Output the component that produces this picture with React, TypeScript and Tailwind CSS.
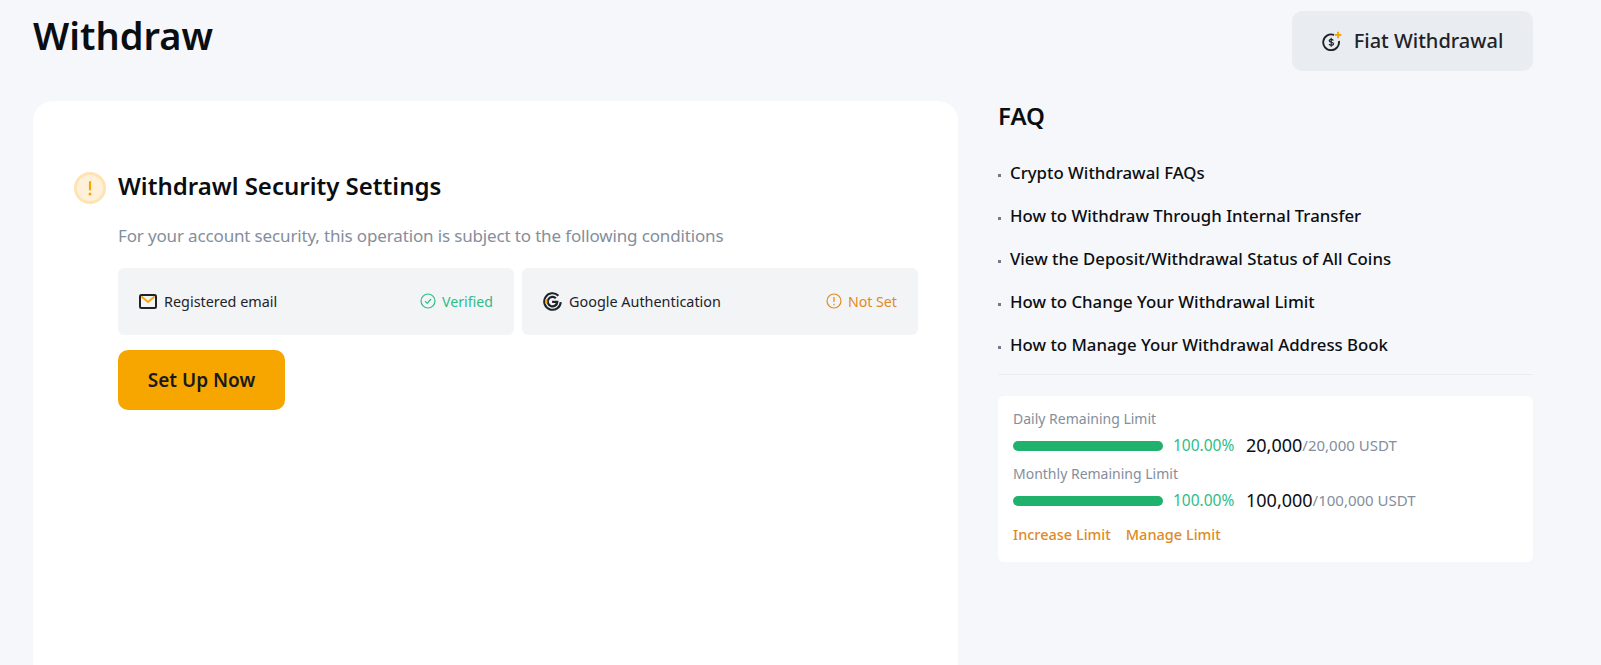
// Withdraw page: security settings card with FAQ and limits on the side.
const FONT = "font-['Noto_Sans',sans-serif]";

const FAQS = [
  'Crypto Withdrawal FAQs',
  'How to Withdraw Through Internal Transfer',
  'View the Deposit/Withdrawal Status of All Coins',
  'How to Change Your Withdrawal Limit',
  'How to Manage Your Withdrawal Address Book',
];

function FiatIcon() {
  return (
    <svg viewBox="0 0 20 20" className="w-5 h-5 shrink-0" fill="none">
      <path d="M12 4A7.9 7.9 0 1 0 16.9 10" stroke="#1e2329" strokeWidth="1.9" />
      <path d="M11.3 9.4c-.4-.8-1.2-1.1-2.1-1.1-1.1 0-2 .5-2 1.4 0 2.1 4.3 1 4.3 3.1 0 1-.9 1.5-2.2 1.5-1 0-1.8-.4-2.2-1.2M9.2 6.8v9" stroke="#1e2329" strokeWidth="1.2" />
      <path d="M16 0.8v6.4M12.8 4h6.4" stroke="#f7a600" strokeWidth="1.9" />
    </svg>
  );
}

function WarnBadge() {
  return (
    <svg viewBox="0 0 32 32" className="w-8 h-8 shrink-0">
      <circle cx="16" cy="16" r="14.5" fill="#fff1d9" stroke="#ffe3b3" strokeWidth="3" />
      <rect x="14.9" y="9" width="2.2" height="9.5" rx="1.1" fill="#f7a600" />
      <circle cx="16" cy="22" r="1.5" fill="#f7a600" />
    </svg>
  );
}

function MailIcon() {
  return (
    <svg viewBox="0 0 18 15" className="w-[18px] h-[15px] shrink-0" fill="none">
      <rect x="1" y="1" width="16" height="13" rx="1.5" stroke="#1e2329" strokeWidth="2" />
      <path d="M2.5 2.5L9 8l6.5-5.5" stroke="#f7a600" strokeWidth="1.8" />
    </svg>
  );
}

function GoogleIcon() {
  return (
    <svg viewBox="0 0 20 20" className="w-[19px] h-[19px] shrink-0" fill="none">
      <path d="M16.2 3.9A8.7 8.7 0 1 0 18.7 10.6" stroke="#1e2329" strokeWidth="2.2" />
      <path d="M13.5 6.6A5 5 0 1 0 15 10.4H9.6" stroke="#1e2329" strokeWidth="2.4" />
      <path d="M2.4 7.6h2.2v4.6H2.4z" fill="#f7a600" />
    </svg>
  );
}

function CheckCircle() {
  return (
    <svg viewBox="0 0 16 16" className="w-4 h-4 shrink-0" fill="none" stroke="#2ebd85" strokeWidth="1.2">
      <circle cx="8" cy="8" r="7" />
      <path d="M5 8.2l2.2 2.2L11 6" />
    </svg>
  );
}

function AlertCircle() {
  return (
    <svg viewBox="0 0 16 16" className="w-4 h-4 shrink-0" fill="none" stroke="#e08a1e" strokeWidth="1.2">
      <circle cx="8" cy="8" r="7" />
      <path d="M8 4v5M8 10.8v1.4" />
    </svg>
  );
}

function Condition({ icon, label, status, statusIcon, color }: {
  icon: React.ReactNode; label: string; status: string; statusIcon: React.ReactNode; color: string;
}) {
  return (
    <div className="flex-1 h-[67px] rounded-md bg-[#f3f4f6] flex items-center justify-between px-[21px]">
      <div className="flex items-center gap-[7px] text-[14.4px] text-[#1e2329]">
        {icon}
        <span>{label}</span>
      </div>
      <div className={`flex items-center gap-[6px] text-[14.2px] ${color}`}>
        {statusIcon}
        <span>{status}</span>
      </div>
    </div>
  );
}

function Limit({ label, value, total }: { label: string; value: string; total: string }) {
  return (
    <div>
      <p className="text-[14px] leading-[20px] text-[#848e9c]">{label}</p>
      <div className="flex items-center h-[35px] pb-[2px]">
        <div className="w-[150px] h-[10px] rounded-full bg-[#20b26c]" />
        <span className="ml-[10px] w-[73px] text-[15.5px] text-[#2ebd85]">100.00%</span>
        <span className="text-[18px] text-[#0b0e11]">{value}</span>
        <span className="text-[15px] text-[#848e9c]">/{total} USDT</span>
      </div>
    </div>
  );
}

export default function App() {
  return (
    <div className={`${FONT} h-screen overflow-hidden bg-[#f5f7fb] pl-[33px] pr-[68px]`}>
      <header className="h-[101px] flex items-start justify-between">
        <h1 className="text-[38px] leading-[70px] font-semibold text-[#0b0e11]">Withdraw</h1>
        <button className="mt-[11px] w-[241px] h-[60px] rounded-[10px] bg-[#e9ecf0] flex items-center justify-center gap-[12px] text-[20px] font-medium text-[#1e2329]">
          <FiatIcon />
          Fiat Withdrawal
        </button>
      </header>
      <main className="flex gap-[40px] h-[564px]">
        <section className="w-[925px] h-[700px] rounded-[20px] bg-white pt-[71px] pl-[41px] pr-[40px]">
          <div className="flex items-center gap-[12px] h-[32px]">
            <WarnBadge />
            <h2 className="text-[24px] pb-[4px] font-semibold text-[#0b0e11]">Withdrawl Security Settings</h2>
          </div>
          <div className="pl-[44px]">
            <p className="mt-[19px] text-[17px] leading-[26px] tracking-[-0.15px] text-[#848e9c]">
              For your account security, this operation is subject to the following conditions
            </p>
            <div className="mt-[19px] flex gap-[8px]">
              <Condition icon={<MailIcon />} label="Registered email" status="Verified" statusIcon={<CheckCircle />} color="text-[#2ebd85]" />
              <Condition icon={<GoogleIcon />} label="Google Authentication" status="Not Set" statusIcon={<AlertCircle />} color="text-[#e08a1e]" />
            </div>
            <button className="mt-[15px] w-[167px] h-[60px] rounded-[10px] bg-[#f7a600] text-[19px] font-semibold text-[#181a20]">
              Set Up Now
            </button>
          </div>
        </section>
        <aside className="w-[535px]">
          <h2 className="text-[24px] leading-[30px] font-semibold text-[#0b0e11]">FAQ</h2>
          <ul className="mt-[20px] border-b border-[#e9ecf0] pb-[8px]">
            {FAQS.map((q) => (
              <li key={q} className="h-[43px] flex items-center text-[16.8px] font-medium text-[#0b0e11]">
                <span className="w-[3px] h-[3px] mr-[9px] mt-[5px] bg-[#707a8a]" />
                {q}
              </li>
            ))}
          </ul>
          <div className="mt-[21px] h-[166px] rounded-md bg-white px-[15px] pt-[13px]">
            <Limit label="Daily Remaining Limit" value="20,000" total="20,000" />
            <Limit label="Monthly Remaining Limit" value="100,000" total="100,000" />
            <div className="mt-[5px] flex gap-[15px] text-[14.5px] font-medium text-[#e08a1e]">
              <span>Increase Limit</span>
              <span>Manage Limit</span>
            </div>
          </div>
        </aside>
      </main>
    </div>
  );
}
